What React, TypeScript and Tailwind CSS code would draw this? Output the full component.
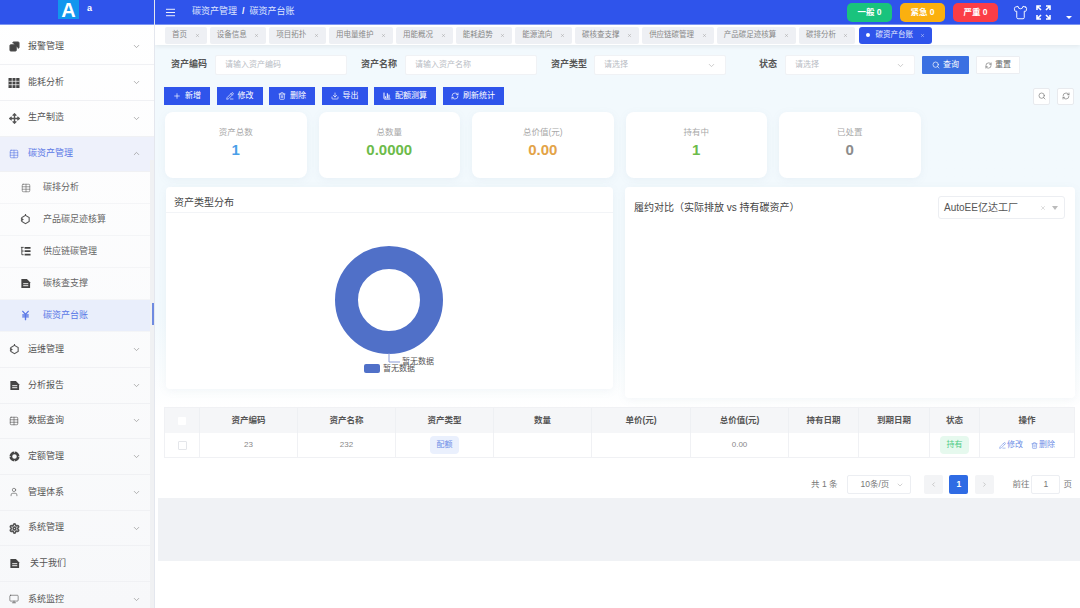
import React from 'react';
import {
  AlignJustify,
  BarChart3,
  ChevronDown,
  ChevronLeft,
  ChevronRight,
  ChevronUp,
  Copy,
  Download,
  JapaneseYen,
  Monitor,
  Move,
  PencilLine,
  Plus,
  RefreshCw,
  Search,
  Settings,
  Shirt,
  Table,
  Trash2,
  User,
  X,
} from 'lucide-react';

// 实心文档图标
const DocIcon = () => (
  <svg width="11" height="11" viewBox="0 0 12 12">
    <path d="M1.5 1h6L11 4.5V11H1.5z" fill="#444" />
    <path d="M3.5 6.2h5.5M3.5 8.4h5.5" stroke="#fff" strokeWidth="1" />
  </svg>
);

const GridIcon = () => (
  <svg width="12" height="12" viewBox="0 0 12 12">
    <rect x="0.5" y="1" width="11" height="10" fill="#444" />
    <path d="M4.2 1v10M7.8 1v10M0.5 4.3h11M0.5 7.7h11" stroke="#fff" strokeWidth="0.7" />
  </svg>
);

const TreeIcon = () => (
  <svg width="11" height="11" viewBox="0 0 12 12">
    <path d="M1 1.5h3M2 1.5v8h2M2 5.5h2" fill="none" stroke="#444" strokeWidth="1" />
    <path d="M5 1h6.5v2H5zM5 4.6h6.5v2H5zM5 8.4h6.5v2H5z" fill="#444" />
  </svg>
);

const RingIcon = () => (
  <svg width="11" height="11" viewBox="0 0 12 12">
    <circle cx="6" cy="6" r="4" fill="none" stroke="#444" strokeWidth="3" />
    <path d="M6 0v2M6 10v2M0 6h2M10 6h2" stroke="#fff" strokeWidth="0.7" />
  </svg>
);

const HexIcon = () => (
  <svg width="11" height="11" viewBox="0 0 12 12" fill="none" stroke="#555" strokeWidth="1.2">
    <path d="M6 1.5l4 2.3v4.4l-4 2.3-4-2.3V3.8z" />
    <path d="M6 0v2M1 5l2 1-2 1" />
  </svg>
);

const topBefore = [
  { label: '报警管理', icon: <Copy className="w-[11px] h-[11px] fill-[#444] -scale-x-100" strokeWidth={2} /> },
  { label: '能耗分析', icon: <GridIcon /> },
  { label: '生产制造', icon: <Move className="w-[11px] h-[11px]" strokeWidth={3} /> },
];

const subItems = [
  { label: '碳排分析', icon: <Table className="w-[10px] h-[10px]" strokeWidth={1.5} /> },
  { label: '产品碳足迹核算', icon: <HexIcon /> },
  { label: '供应链碳管理', icon: <TreeIcon /> },
  { label: '碳核查支撑', icon: <DocIcon /> },
];

const topAfter = [
  { label: '运维管理', icon: <HexIcon />, arrow: true },
  { label: '分析报告', icon: <DocIcon />, arrow: true },
  { label: '数据查询', icon: <Table className="w-[10px] h-[10px]" strokeWidth={1.5} />, arrow: true },
  { label: '定额管理', icon: <RingIcon />, arrow: true },
  { label: '管理体系', icon: <User className="w-[10px] h-[10px]" strokeWidth={1.5} />, arrow: true },
  { label: '系统管理', icon: <Settings className="w-[11px] h-[11px]" strokeWidth={3.5} />, arrow: true },
  { label: '关于我们', icon: <DocIcon />, arrow: false },
  { label: '系统监控', icon: <Monitor className="w-[10px] h-[10px]" strokeWidth={1.5} />, arrow: true },
];

const tabs = [
  '首页',
  '设备信息',
  '项目拓扑',
  '用电量维护',
  '用能概况',
  '能耗趋势',
  '能源流向',
  '碳核查支撑',
  '供应链碳管理',
  '产品碳足迹核算',
  '碳排分析',
];

const actions = [
  { label: '新增', icon: <Plus className="w-[8px] h-[8px]" />, w: 'w-[46px]' },
  { label: '修改', icon: <PencilLine className="w-[8px] h-[8px]" />, w: 'w-[46px]' },
  { label: '删除', icon: <Trash2 className="w-[8px] h-[8px]" />, w: 'w-[46px]' },
  { label: '导出', icon: <Download className="w-[8px] h-[8px]" />, w: 'w-[46px]' },
  { label: '配额测算', icon: <BarChart3 className="w-[8px] h-[8px]" strokeWidth={3} />, w: 'w-[62px]' },
  { label: '刷新统计', icon: <RefreshCw className="w-[8px] h-[8px]" />, w: 'w-[61px]' },
];

const stats = [
  { label: '资产总数', value: '1', color: 'text-[#4a9fe8]' },
  { label: '总数量', value: '0.0000', color: 'text-[#6cbb4a]' },
  { label: '总价值(元)', value: '0.00', color: 'text-[#e3a347]' },
  { label: '持有中', value: '1', color: 'text-[#6cbb4a]' },
  { label: '已处置', value: '0', color: 'text-[#8c8c8c]' },
];

const columns = [
  { label: '资产编码', w: 'w-[98px]' },
  { label: '资产名称', w: 'w-[98px]' },
  { label: '资产类型', w: 'w-[98px]' },
  { label: '数量', w: 'w-[98px]' },
  { label: '单价(元)', w: 'w-[99px]' },
  { label: '总价值(元)', w: 'w-[98px]' },
  { label: '持有日期', w: 'w-[70px]' },
  { label: '到期日期', w: 'w-[71px]' },
  { label: '状态', w: 'w-[50px]' },
];

function SideRow({ label, icon, arrow, open }: { label: string; icon: React.ReactNode; arrow?: boolean; open?: boolean }) {
  return (
    <div
      className={`h-[35.7px] shrink-0 flex items-center pl-[8px] pr-[13px] border-b border-[#f0f1f4] ${
        open ? 'bg-[#eef1fb] text-[#5b78e6]' : 'text-[#555]'
      }`}
    >
      <span className="w-[12px] flex justify-center">{icon}</span>
      <span className={`text-[9px] ${arrow ? 'ml-[8px]' : 'ml-[10px]'}`}>{label}</span>
      {arrow && (
        <span className="ml-auto text-[#999]">
          {open ? <ChevronUp className="w-[9px] h-[9px]" /> : <ChevronDown className="w-[9px] h-[9px]" />}
        </span>
      )}
    </div>
  );
}

function SubRow({ label, icon, active }: { label: string; icon: React.ReactNode; active?: boolean }) {
  return (
    <div
      className={`h-[32px] shrink-0 flex items-center pl-[20px] border-b border-[#f4f5f7] ${
        active ? 'bg-[#e9eefb] text-[#5b78e6]' : 'text-[#666]'
      }`}
    >
      <span className="w-[11px] flex justify-center">{icon}</span>
      <span className="text-[9px] ml-[12px]">{label}</span>
    </div>
  );
}

function FilterField({ label, placeholder, labelW, fieldW, select }: { label: string; placeholder: string; labelW: string; fieldW: string; select?: boolean }) {
  return (
    <div className="flex items-center">
      <span className={`${labelW} text-[9px] font-bold text-[#555]`}>{label}</span>
      <div className={`${fieldW} h-[20px] bg-white rounded-[2px] border border-[#f0f2f5] flex items-center justify-between px-[9px] text-[8px] text-[#b8bcc4]`}>
        <span>{placeholder}</span>
        {select && <ChevronDown className="w-[9px] h-[9px] text-[#bbb]" />}
      </div>
    </div>
  );
}

export default function App() {
  return (
    <div className="w-[1080px] h-[608px] overflow-hidden flex bg-white font-['Liberation_Sans','Noto_Sans_CJK_SC',sans-serif]">
      {/* 左侧菜单 */}
      <aside className="w-[155px] shrink-0 flex flex-col relative bg-gradient-to-b from-white to-[#f7f8fa] border-r border-[#e4e7ee] z-10">
        <div className="h-[25px] shrink-0 bg-[#2f54eb] border-b border-[#7d96f2] flex items-start pl-[58px]">
          <div className="w-[21px] h-[19px] bg-[#1296ee] flex items-center justify-center text-white font-bold text-[20px] leading-none">A</div>
          <span className="ml-[8px] mt-[2px] text-[9px] font-bold text-white">a</span>
        </div>
        <div className="flex-1 overflow-hidden flex flex-col pt-[4.5px]">
          {topBefore.map((item) => (
            <SideRow key={item.label} label={item.label} icon={item.icon} arrow />
          ))}
          <SideRow label="碳资产管理" icon={<Table className="w-[10px] h-[10px]" strokeWidth={1.5} />} arrow open />
          {subItems.map((item) => (
            <SubRow key={item.label} label={item.label} icon={item.icon} />
          ))}
          <SubRow label="碳资产台账" icon={<JapaneseYen className="w-[11px] h-[11px]" strokeWidth={3} />} active />
          {topAfter.map((item) => (
            <SideRow key={item.label} label={item.label} icon={item.icon} arrow={item.arrow} />
          ))}
        </div>
        <div className="absolute right-0 top-[160px] bottom-0 w-[4px] bg-[#f0f1f3]" />
        <div className="absolute right-0 top-[303px] h-[22px] w-[2px] bg-[#6f8be0]" />
      </aside>

      <div className="flex-1 min-w-0 flex flex-col">
        {/* 顶栏 */}
        <header className="h-[25px] shrink-0 bg-[#2f54eb] border-b border-[#7d96f2] flex items-center pl-[10px] pr-[8px] text-white">
          <AlignJustify className="w-[11px] h-[11px]" />
          <span className="ml-[16px] text-[9px] text-[#dfe5fd]">碳资产管理</span>
          <span className="mx-[5px] text-[9px] font-bold">/</span>
          <span className="text-[9px] text-[#dfe5fd]">碳资产台账</span>
          <div className="ml-auto flex items-center">
            <span className="w-[45px] h-[19px] rounded-[5px] bg-[#19c37d] flex items-center justify-center text-[8.5px] font-bold">一般 0</span>
            <span className="ml-[8px] w-[45px] h-[19px] rounded-[5px] bg-[#fbb00f] flex items-center justify-center text-[8.5px] font-bold">紧急 0</span>
            <span className="ml-[8px] w-[45px] h-[19px] rounded-[5px] bg-[#fb3d46] flex items-center justify-center text-[8.5px] font-bold">严重 0</span>
            <Shirt className="ml-[15px] w-[15px] h-[15px]" strokeWidth={1.5} />
            <svg className="ml-[8px]" width="15" height="15" viewBox="0 0 15 15" fill="none" stroke="#fff" strokeWidth="1.6">
              <path d="M1 5V1h4M1 1l4 4M14 5V1h-4M14 1l-4 4M1 10v4h4M1 14l4-4M14 10v4h-4M14 14l-4-4" />
            </svg>
            <span className="ml-[15px] mt-[10px] w-0 h-0 border-x-[3px] border-x-transparent border-t-[3px] border-t-white" />
          </div>
        </header>

        {/* 标签页 */}
        <div className="h-[20px] shrink-0 flex items-center gap-[3.15px] pl-[10px] bg-white shadow-[0_2px_4px_rgba(0,0,0,0.06)] z-[1]">
          {tabs.map((tab) => (
            <div key={tab} className="h-[17px] flex items-center gap-[7.5px] px-[7px] rounded-[2px] bg-[#eef0f4] text-[#888] text-[7.5px]">
              <span>{tab}</span>
              <X className="w-[5px] h-[5px] text-[#999]" />
            </div>
          ))}
          <div className="h-[17px] flex items-center px-[7px] rounded-[3px] bg-[#2f54eb] text-[#e8ecfd] text-[7.5px]">
            <span className="w-[4px] h-[4px] rounded-full bg-white mr-[6px]" />
            <span>碳资产台账</span>
            <X className="ml-[7px] w-[5px] h-[5px]" />
          </div>
        </div>

        {/* 内容区 */}
        <main className="h-[453px] shrink-0 pl-[9px] pr-[5px] pt-[10px] bg-gradient-to-b from-[#f2f9fd] from-60% to-white to-80%">
          <div className="h-[20px] flex items-center pl-[7px]">
            <FilterField label="资产编码" placeholder="请输入资产编码" labelW="w-[44px]" fieldW="w-[132px]" />
            <div className="w-[14px]" />
            <FilterField label="资产名称" placeholder="请输入资产名称" labelW="w-[44px]" fieldW="w-[132px]" />
            <div className="w-[14px]" />
            <FilterField label="资产类型" placeholder="请选择" labelW="w-[43px]" fieldW="w-[132px]" select />
            <div className="w-[33px]" />
            <FilterField label="状态" placeholder="请选择" labelW="w-[26px]" fieldW="w-[130px]" select />
            <button className="ml-[7px] w-[47px] h-[18px] bg-[#3a70e2] text-white text-[8px] rounded-[1px] flex items-center justify-center gap-[3px]">
              <Search className="w-[8px] h-[8px]" />
              查询
            </button>
            <button className="ml-[7px] w-[44px] h-[18px] bg-white border border-[#eceef2] text-[#666] text-[8px] rounded-[1px] flex items-center justify-center gap-[3px]">
              <RefreshCw className="w-[7px] h-[7px]" />
              重置
            </button>
          </div>

          <div className="mt-[12px] h-[18px] flex items-center gap-[6.5px]">
            {actions.map((a) => (
              <button key={a.label} className={`${a.w} h-[18px] bg-[#2f54eb] text-white text-[8px] flex items-center justify-center gap-[4px]`}>
                {a.icon}
                {a.label}
              </button>
            ))}
            <div className="ml-auto flex gap-[7px] mr-[1px]">
              <span className="w-[17px] h-[17px] bg-white border border-[#e8eaee] rounded-[2px] flex items-center justify-center text-[#777]">
                <Search className="w-[8px] h-[8px]" />
              </span>
              <span className="w-[17px] h-[17px] bg-white border border-[#e8eaee] rounded-[2px] flex items-center justify-center text-[#777]">
                <RefreshCw className="w-[8px] h-[8px]" />
              </span>
            </div>
          </div>

          <div className="mt-[7px] h-[66px] flex gap-[12px] pl-[1px]">
            {stats.map((s) => (
              <div key={s.label} className="w-[141.5px] bg-white rounded-[8px] shadow-[0_2px_8px_rgba(120,140,170,0.08)] flex flex-col items-center pt-[14px]">
                <span className="text-[8.5px] leading-[12px] text-[#a8a8a8]">{s.label}</span>
                <span className={`text-[15px] leading-[18px] mt-[3px] font-bold ${s.color}`}>{s.value}</span>
              </div>
            ))}
          </div>

          <div className="mt-[9px] h-[211px] flex items-start pl-[2px] gap-[12px]">
            {/* 资产类型分布 */}
            <section className="w-[447px] h-[202px] relative bg-white rounded-[4px] shadow-[0_2px_8px_rgba(120,140,170,0.08)]">
              <div className="h-[26px] pl-[8px] pt-[9px] text-[10px] leading-[14px] text-[#444] border-b border-[#f2f4f7]">资产类型分布</div>
              <svg className="absolute left-[169px] top-[59px]" width="108" height="108" viewBox="0 0 108 108">
                <circle cx="54" cy="54" r="42.5" fill="none" stroke="#5070c8" strokeWidth="23" />
              </svg>
              <svg className="absolute left-[222px] top-[166px]" width="16" height="12" viewBox="0 0 16 12">
                <path d="M1 0 V9 H12" fill="none" stroke="#8a9bd8" strokeWidth="1" />
              </svg>
              <span className="absolute left-[236px] top-[169px] text-[8px] leading-[11px] text-[#555]">暂无数据</span>
              <span className="absolute left-[198px] top-[177px] w-[16px] h-[9px] rounded-[2px] bg-[#5070c8]" />
              <span className="absolute left-[217px] top-[176px] text-[8px] leading-[11px] text-[#555]">暂无数据</span>
            </section>

            {/* 履约对比 */}
            <section className="w-[450px] h-[211px] bg-white rounded-[4px] shadow-[0_2px_8px_rgba(120,140,170,0.08)] pl-[9px] pr-[10px] pt-[9px]">
              <div className="flex items-center justify-between">
                <span className="text-[10px] text-[#444]">履约对比（实际排放 vs 持有碳资产）</span>
                <div className="w-[127px] h-[23px] rounded-[3px] border border-[#eceef2] flex items-center pl-[5px] pr-[6px] text-[10px] text-[#555]">
                  <span>AutoEE亿达工厂</span>
                  <X className="ml-auto w-[6px] h-[6px] text-[#bbb]" />
                  <span className="ml-[6px] w-0 h-0 border-x-[3px] border-x-transparent border-t-[4px] border-t-[#bbb]" />
                </div>
              </div>
            </section>
          </div>

          {/* 表格 */}
          <div className="mt-[9px] border border-[#f0f1f4] text-[8px] w-[911px]">
            <div className="h-[25px] flex bg-[#f5f6f8] text-[#555] text-[8.5px] font-bold">
              <div className="w-[35px] flex items-center justify-center border-r border-[#eef0f3]">
                <span className="w-[8px] h-[8px] bg-white rounded-[1px]" />
              </div>
              {columns.map((c) => (
                <div key={c.label} className={`${c.w} flex items-center justify-center border-r border-[#eef0f3]`}>
                  {c.label}
                </div>
              ))}
              <div className="flex-1 flex items-center justify-center">操作</div>
            </div>
            <div className="h-[24px] flex text-[#888] bg-white">
              <div className="w-[35px] flex items-center justify-center border-r border-[#f0f1f4]">
                <span className="w-[9px] h-[9px] border border-[#e4e6ea] rounded-[1px]" />
              </div>
              <div className="w-[98px] flex items-center justify-center border-r border-[#f0f1f4]">23</div>
              <div className="w-[98px] flex items-center justify-center border-r border-[#f0f1f4]">232</div>
              <div className="w-[98px] flex items-center justify-center border-r border-[#f0f1f4]">
                <span className="w-[29px] h-[18px] rounded-[4px] bg-[#eaf0fd] text-[#6f8fe6] flex items-center justify-center">配额</span>
              </div>
              <div className="w-[98px] border-r border-[#f0f1f4]" />
              <div className="w-[99px] border-r border-[#f0f1f4]" />
              <div className="w-[98px] flex items-center justify-center border-r border-[#f0f1f4]">0.00</div>
              <div className="w-[70px] border-r border-[#f0f1f4]" />
              <div className="w-[71px] border-r border-[#f0f1f4]" />
              <div className="w-[50px] flex items-center justify-center border-r border-[#f0f1f4]">
                <span className="w-[29px] h-[18px] rounded-[4px] bg-[#e6f9ee] text-[#4ccb85] flex items-center justify-center">持有</span>
              </div>
              <div className="flex-1 flex items-center justify-center gap-[8px] text-[#6f8fe6]">
                <span className="flex items-center gap-[1px]">
                  <PencilLine className="w-[7px] h-[7px]" />
                  修改
                </span>
                <span className="flex items-center gap-[1px]">
                  <Trash2 className="w-[7px] h-[7px]" />
                  删除
                </span>
              </div>
            </div>
          </div>

          {/* 分页 */}
          <div className="mt-[17px] h-[19px] flex items-center justify-end text-[8.5px] text-[#777] pr-[3px]">
            <span>共 1 条</span>
            <div className="ml-[10px] w-[64px] h-[19px] rounded-[2px] border border-[#eceef2] flex items-center justify-between pl-[12px] pr-[6px]">
              <span>10条/页</span>
              <ChevronDown className="w-[8px] h-[8px] text-[#bbb]" />
            </div>
            <span className="ml-[13px] w-[19px] h-[19px] bg-[#f3f4f6] rounded-[2px] flex items-center justify-center text-[#aaa]">
              <ChevronLeft className="w-[7px] h-[7px]" />
            </span>
            <span className="ml-[6px] w-[19px] h-[19px] bg-[#2f6be4] rounded-[2px] flex items-center justify-center text-white font-bold">1</span>
            <span className="ml-[7px] w-[19px] h-[19px] bg-[#f3f4f6] rounded-[2px] flex items-center justify-center text-[#aaa]">
              <ChevronRight className="w-[7px] h-[7px]" />
            </span>
            <span className="ml-[18px]">前往</span>
            <span className="ml-[2px] w-[29px] h-[19px] rounded-[2px] border border-[#eceef2] flex items-center justify-center">1</span>
            <span className="ml-[3px]">页</span>
          </div>
        </main>

        <div className="h-[63px] shrink-0 ml-[3px] bg-[#f0f2f5]" />
      </div>
    </div>
  );
}
